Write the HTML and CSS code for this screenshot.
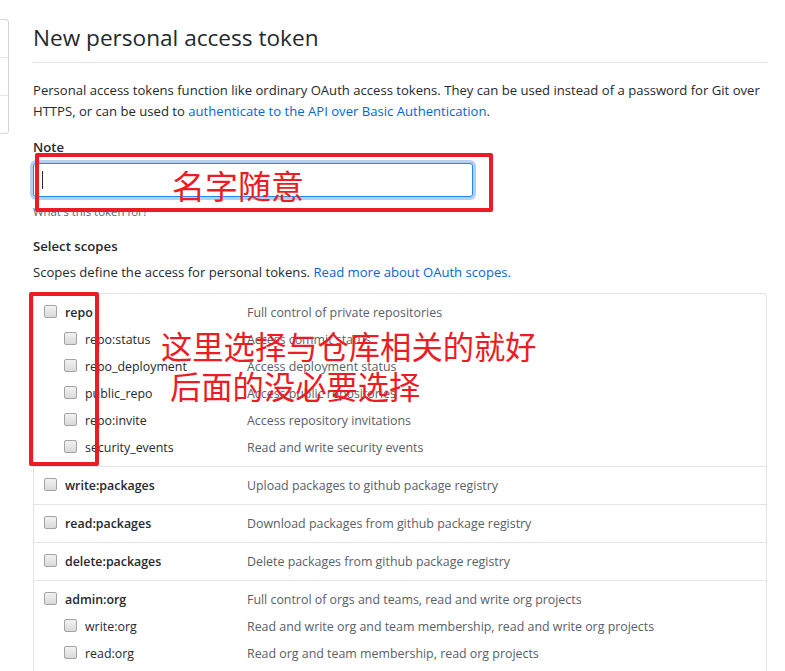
FILE: index.html
```html
<!DOCTYPE html>
<html lang="en">

<head>
    <meta charset="UTF-8">
    <meta name="viewport" content="width=device-width, initial-scale=1.0">
    <title>New personal access token</title>
    <link rel="stylesheet" href="styles.css">
</head>

<body>
    <div class="page">
        <!-- Menu lateral (quase todo fora da tela) -->
        <nav class="menu">
            <div class="menu-item">GitHub Apps</div>
            <div class="menu-item">OAuth Apps</div>
            <div class="menu-item">Personal access tokens</div>
        </nav>

        <main class="content">
            <h1 class="title">New personal access token</h1>
            <p class="intro">Personal access tokens function like ordinary OAuth access tokens. They can be used instead of a password for Git over HTTPS, or can be used to <a href="#">authenticate to the API over Basic Authentication</a>.</p>

            <div class="field">
                <label class="field-label" for="note">Note</label>
                <div class="input-wrap">
                    <input class="input" type="text" id="note">
                </div>
                <p class="note">What's this token for?</p>
            </div>

            <h3 class="section-title">Select scopes</h3>
            <p class="section-desc">Scopes define the access for personal tokens. <a href="#">Read more about OAuth scopes.</a></p>

            <div class="scopes">
                <div class="scope-group">
                    <div class="scope-row">
                        <label class="scope-name"><input class="check" type="checkbox"><strong>repo</strong></label>
                        <span class="scope-desc">Full control of private repositories</span>
                    </div>
                    <div class="scope-row sub">
                        <label class="scope-name"><input class="check" type="checkbox">repo:status</label>
                        <span class="scope-desc">Access commit status</span>
                    </div>
                    <div class="scope-row sub">
                        <label class="scope-name"><input class="check" type="checkbox">repo_deployment</label>
                        <span class="scope-desc">Access deployment status</span>
                    </div>
                    <div class="scope-row sub">
                        <label class="scope-name"><input class="check" type="checkbox">public_repo</label>
                        <span class="scope-desc">Access public repositories</span>
                    </div>
                    <div class="scope-row sub">
                        <label class="scope-name"><input class="check" type="checkbox">repo:invite</label>
                        <span class="scope-desc">Access repository invitations</span>
                    </div>
                    <div class="scope-row sub">
                        <label class="scope-name"><input class="check" type="checkbox">security_events</label>
                        <span class="scope-desc">Read and write security events</span>
                    </div>
                </div>
                <div class="scope-group">
                    <div class="scope-row">
                        <label class="scope-name"><input class="check" type="checkbox"><strong>write:packages</strong></label>
                        <span class="scope-desc">Upload packages to github package registry</span>
                    </div>
                </div>
                <div class="scope-group">
                    <div class="scope-row">
                        <label class="scope-name"><input class="check" type="checkbox"><strong>read:packages</strong></label>
                        <span class="scope-desc">Download packages from github package registry</span>
                    </div>
                </div>
                <div class="scope-group">
                    <div class="scope-row">
                        <label class="scope-name"><input class="check" type="checkbox"><strong>delete:packages</strong></label>
                        <span class="scope-desc">Delete packages from github package registry</span>
                    </div>
                </div>
                <div class="scope-group">
                    <div class="scope-row">
                        <label class="scope-name"><input class="check" type="checkbox"><strong>admin:org</strong></label>
                        <span class="scope-desc">Full control of orgs and teams, read and write org projects</span>
                    </div>
                    <div class="scope-row sub">
                        <label class="scope-name"><input class="check" type="checkbox">write:org</label>
                        <span class="scope-desc">Read and write org and team membership, read and write org projects</span>
                    </div>
                    <div class="scope-row sub">
                        <label class="scope-name"><input class="check" type="checkbox">read:org</label>
                        <span class="scope-desc">Read org and team membership, read org projects</span>
                    </div>
                </div>
            </div>

            <!-- Anotações em vermelho por cima da página -->
            <div class="mark-box mark-note"></div>
            <div class="mark-text mark-note-text">名字随意</div>
            <div class="mark-box mark-scopes"></div>
            <div class="mark-text mark-scopes-text">
                <span class="mark-line">这里选择与仓库相关的就好</span>
                <span class="mark-line second">后面的没必要选择</span>
            </div>
        </main>
    </div>
</body>

</html>
```

FILE: styles.css
```css
/* Reset */
* {
    box-sizing: border-box;
}

body {
    margin: 0;
    font-family: "Open Sans", "Noto Sans", sans-serif;
    font-size: 13.1px;
    line-height: 21px;
    color: #24292e;
    background-color: #fff;
}

a {
    color: #0366d6;
    text-decoration: none;
}

/* Layout */
.page {
    display: flex;
    gap: 24px;
    padding: 19px 18px 0 0;
}

.menu {
    flex: 0 0 181px;
    margin-left: -172px;
    align-self: flex-start;
    border: 1px solid #d1d5da;
    border-radius: 3px;
}

.menu-item {
    height: 38px;
    padding: 8px 16px;
    border-bottom: 1px solid #e1e4e8;
    white-space: nowrap;
}

.menu-item:last-child {
    height: 37px;
    border-bottom: none;
}

.content {
    flex: 1;
    position: relative;
}

/* Cabeçalho */
.title {
    margin: 1px 0 0;
    padding-bottom: 6px;
    font-size: 22.6px;
    font-weight: 400;
    line-height: 36px;
    border-bottom: 1px solid #e1e4e8;
}

.intro {
    margin: 17px 0 0;
}

/* Campo Note */
.field {
    margin-top: 15px;
}

.field-label {
    display: block;
    font-weight: 600;
    margin-bottom: 5px;
}

.input-wrap {
    position: relative;
    width: 440px;
}

.input {
    display: block;
    width: 440px;
    height: 34px;
    padding: 6px 8px;
    font: inherit;
    border: 1px solid #2188ff;
    border-radius: 3px;
    box-shadow: 0 0 0 3px rgba(3, 102, 214, 0.3);
    outline: none;
}

.input-wrap::after {
    content: "";
    position: absolute;
    left: 9px;
    top: 8px;
    width: 1px;
    height: 18px;
    background-color: #24292e;
}

.note {
    margin: 6px 0 0;
    font-size: 11.4px;
    line-height: 18px;
    color: #586069;
}

/* Scopes */
.section-title {
    margin: 15px 0 0;
    font-size: 13.2px;
    font-weight: 600;
}

.section-desc {
    margin: 5px 0 0;
}

.scopes {
    margin-top: 10px;
    border: 1px solid #e1e4e8;
    border-radius: 3px;
    font-size: 12.4px;
}

.scope-group {
    padding: 5px 0;
    border-top: 1px solid #e1e4e8;
}

.scope-group:first-child {
    border-top: none;
}

.scope-row {
    display: grid;
    grid-template-columns: 213px 1fr;
    align-items: center;
    height: 27px;
}

.scope-name {
    display: flex;
    align-items: center;
    padding-left: 10px;
}

.scope-row.sub .scope-name {
    padding-left: 30px;
}

.scope-name strong {
    font-weight: 600;
}

.scope-desc {
    color: #586069;
    white-space: nowrap;
}

.check {
    appearance: none;
    position: relative;
    top: -1px;
    flex: 0 0 13px;
    width: 13px;
    height: 13px;
    margin: 0 8px 0 0;
    border: 1px solid #a3a3a3;
    border-radius: 2px;
    background: linear-gradient(#f2f2f2, #d9d9d9);
}

/* Anotações vermelhas */
.mark-box {
    position: absolute;
    border: 4px solid #ed1c24;
    border-radius: 2px;
}

.mark-note {
    left: 2px;
    top: 134px;
    width: 458px;
    height: 59px;
}

.mark-scopes {
    left: -4px;
    top: 273px;
    width: 70px;
    height: 174px;
}

.mark-text {
    position: absolute;
    color: #ed1c24;
    font-family: "Noto Sans CJK SC", sans-serif;
    white-space: nowrap;
}

.mark-note-text {
    left: 139px;
    top: 150px;
    font-size: 33px;
    line-height: 33px;
}

.mark-scopes-text {
    left: 128px;
    top: 311px;
    font-size: 31.3px;
    line-height: 31.3px;
}

.mark-line {
    display: block;
}

.mark-line.second {
    margin-top: 9px;
    margin-left: 9px;
}
```
